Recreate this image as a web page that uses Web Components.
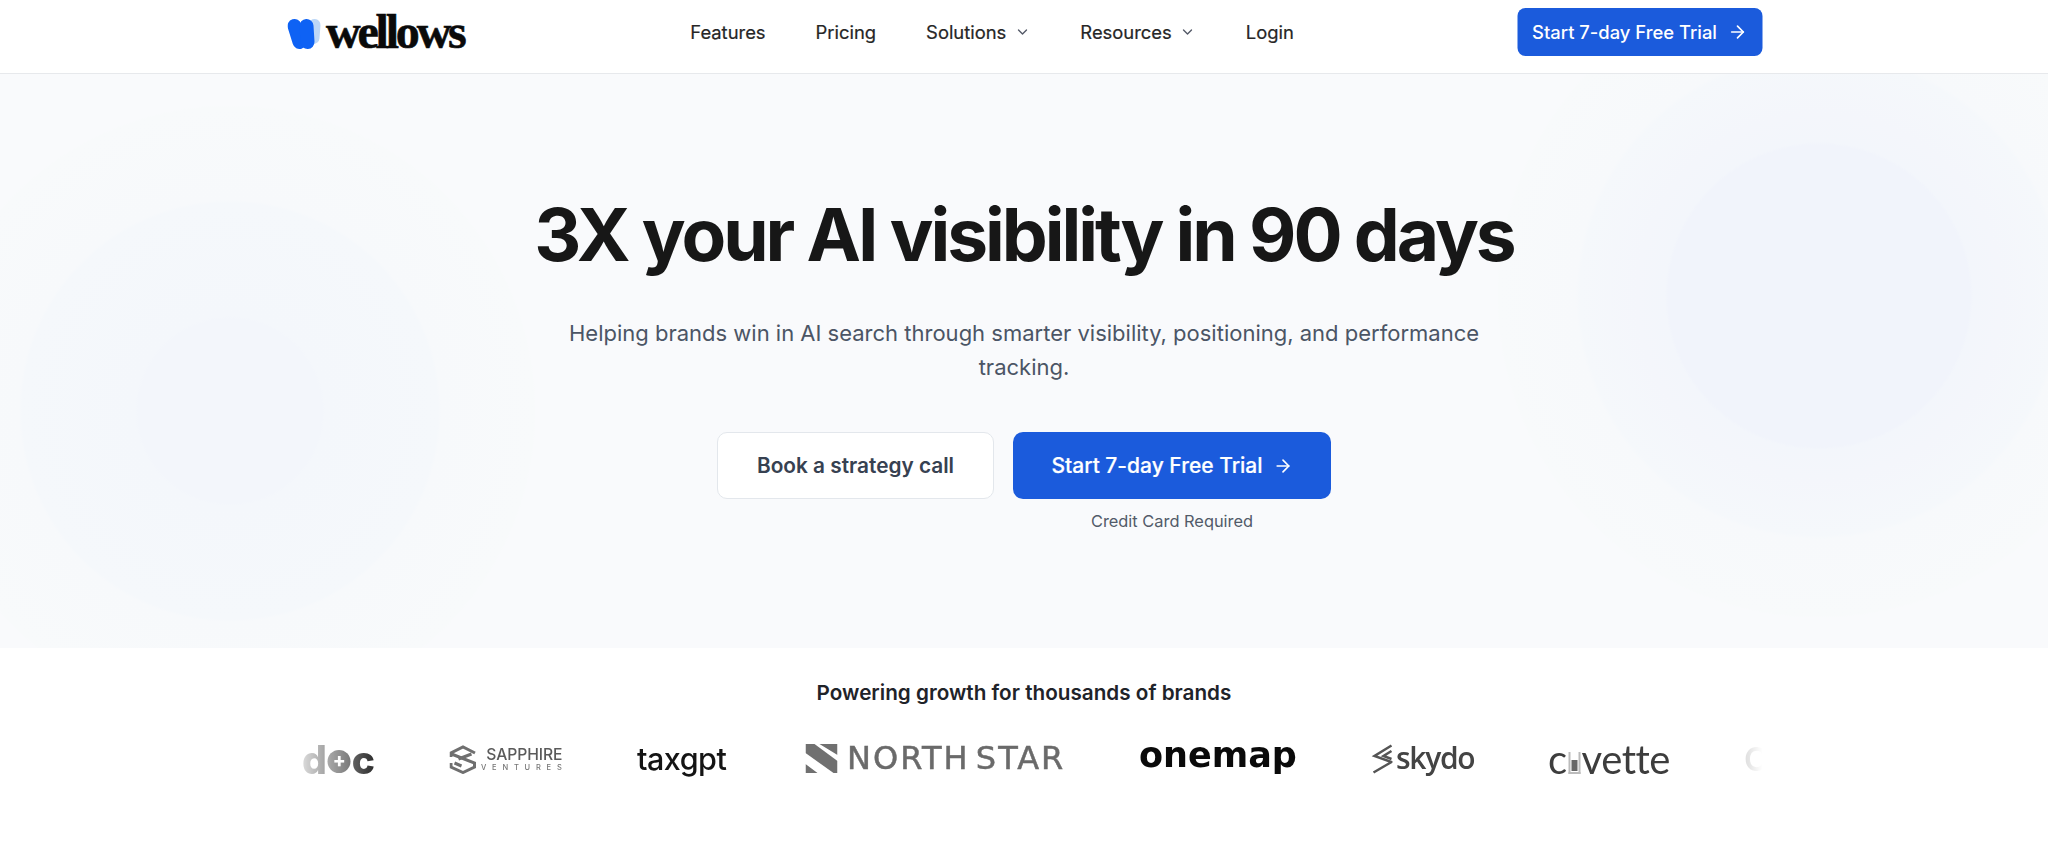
<!DOCTYPE html>
<html lang="en">
<head>
<meta charset="utf-8">
<title>wellows</title>
<style>
  html, body { margin: 0; padding: 0; background: #fff; }
  body { font-family: Inter, "Liberation Sans", sans-serif; color: #171717; overflow: hidden; }
</style>
</head>
<body>
<site-nav></site-nav>
<hero-section></hero-section>
<brand-strip></brand-strip>

<script>
  const arrow = `<svg width="20" height="20" viewBox="0 0 24 24" fill="none" stroke="currentColor" stroke-width="2" stroke-linecap="round" stroke-linejoin="round"><path d="M5 12h14"/><path d="m12 5 7 7-7 7"/></svg>`;
  const chevron = `<svg width="16" height="16" viewBox="0 0 24 24" fill="none" stroke="#525866" stroke-width="2" stroke-linecap="round" stroke-linejoin="round"><path d="m6 9 6 6 6-6"/></svg>`;

  // 导航栏
  class SiteNav extends HTMLElement {
    constructor() {
      super();
      this.attachShadow({ mode: 'open' });
      this.shadowRoot.innerHTML = `
        <style>
          :host { display: block; height: 73px; background: #fff; border-bottom: 1px solid #e7e9ec; }
          .inner { width: 1475px; height: 64px; margin: 0 auto; display: flex; align-items: center; justify-content: space-between; transform: translateX(.5px); }
          .brand { display: flex; align-items: center; width: 180px; height: 64px; }
          .brand svg { flex: none; margin-right: 5px; margin-top: 3px; }
          .word { font: 700 48px/64px "Liberation Serif", serif; letter-spacing: -3.200px; color: #0a0a0a; -webkit-text-stroke: .6px #0a0a0a; }
          nav { display: flex; align-items: center; gap: 50px; font-size: 18.400px; font-weight: 400; color: #262626; margin-left: 0; -webkit-text-stroke: .2px #262626; }
          nav span { display: flex; align-items: center; gap: 8px; }
          .cta { display: flex; align-items: center; gap: 10px; height: 48px; box-sizing: border-box; padding: 0 15px; background: #1b5bdc; color: #fff; border-radius: 8px; font-size: 18.400px; font-weight: 500; }
        </style>
        <div class="inner">
          <div class="brand">
            <svg width="34" height="32" viewBox="0 0 34 32" fill="none" stroke-linecap="round">
              <path d="M27 7 26 20" stroke="#bcd7f7" stroke-width="12"/>
              <path d="M7 8 12 24" stroke="#0e62f4" stroke-width="14"/>
              <path d="M19 8 20 24" stroke="#0e62f4" stroke-width="14"/>
            </svg>
            <span class="word">wellows</span>
          </div>
          <nav>
            <span>Features</span>
            <span>Pricing</span>
            <span>Solutions ${chevron}</span>
            <span>Resources ${chevron}</span>
            <span>Login</span>
          </nav>
          <div class="cta">Start 7-day Free Trial ${arrow}</div>
        </div>`;
    }
  }

  // 首屏
  class HeroSection extends HTMLElement {
    constructor() {
      super();
      this.attachShadow({ mode: 'open' });
      this.shadowRoot.innerHTML = `
        <style>
          :host {
            display: block; height: 574px; box-sizing: border-box; padding-top: 121px; text-align: center;
            background:
              radial-gradient(circle 306px at 230px 337px, #f3f6fb 0, #f3f6fb 92px, #f4f7fb 95px, #f5f8fb 208px, #f7f9fb 211px, #f8fafb 304px, rgba(249,250,252,0) 306px),
              radial-gradient(circle 322px at 1819px 222px, #f1f4fb 0, #f1f4fb 151px, #f3f6fb 154px, #f4f6fb 182px, #f5f8fb 239px, #f7f9fb 243px, #f8fafb 320px, rgba(249,250,252,0) 322px),
              #f9fafc;
          }
          h1 { margin: 0; font-size: 73px; line-height: 80px; font-weight: 700; letter-spacing: -3.030px; color: #171717; }
          p { margin: 41px auto 0; width: 930px; font-size: 22px; line-height: 34px; color: #4b5565; }
          .actions { display: flex; justify-content: center; align-items: flex-start; gap: 19px; margin-top: 48px; }
          .btn { display: flex; align-items: center; justify-content: center; box-sizing: border-box; height: 67px; border-radius: 10px; font-size: 20.800px; font-weight: 600; }
          .ghost { width: 277px; background: #fff; border: 1px solid #e3e7ec; color: #374151; }
          .solid { width: 318px; gap: 10px; background: #1b5bdc; color: #fff; font-size: 21px; font-weight: 500; -webkit-text-stroke: .2px #fff; }
          .stack { display: flex; flex-direction: column; align-items: center; }
          small { display: block; margin-top: 11px; font-size: 16.400px; line-height: 22px; color: #525b69; }
        </style>
        <h1>3X your AI visibility in 90 days</h1>
        <p>Helping brands win in AI search through smarter visibility, positioning, and performance tracking.</p>
        <div class="actions">
          <div class="btn ghost">Book a strategy call</div>
          <div class="stack">
            <div class="btn solid">Start 7-day Free Trial ${arrow}</div>
            <small>Credit Card Required</small>
          </div>
        </div>`;
    }
  }

  // 单个品牌，slot 里放文字
  class BrandLogo extends HTMLElement {
    constructor() {
      super();
      this.attachShadow({ mode: 'open' });
      this.shadowRoot.innerHTML = `
        <style>
          :host { display: flex; flex: none; align-items: center; height: 50px; white-space: nowrap; filter: blur(.6px); }
          ::slotted(svg) { flex: none; }
        </style>
        <slot></slot>`;
    }
  }

  // 品牌条
  class BrandStrip extends HTMLElement {
    constructor() {
      super();
      this.attachShadow({ mode: 'open' });
      this.shadowRoot.innerHTML = `
        <style>
          :host { display: block; height: 205px; background: #fff; text-align: center; }
          h2 { margin: 0; padding-top: 30px; font-size: 20.700px; line-height: 30px; font-weight: 600; color: #1f2329; }
          .track { width: 1475px; margin: 26px auto 0; display: flex; align-items: center; gap: 74px; overflow: hidden; transform: translateX(.5px);
            -webkit-mask-image: linear-gradient(90deg, transparent 0, #000 90px, #000 1385px, transparent 100%);
            mask-image: linear-gradient(90deg, transparent 0, #000 90px, #000 1385px, transparent 100%); }
        </style>
        <h2>Powering growth for thousands of brands</h2>
        <div class="track"><slot></slot></div>`;
    }
  }

  customElements.define('site-nav', SiteNav);
  customElements.define('hero-section', HeroSection);
  customElements.define('brand-logo', BrandLogo);
  customElements.define('brand-strip', BrandStrip);

  // 品牌列表
  document.querySelector('brand-strip').innerHTML = `
    <brand-logo style="width:88px;font:800 39px Inter,sans-serif;color:#262626;justify-content:flex-end;gap:0">d<span style="display:inline-flex;align-items:center;justify-content:center;width:23px;height:23px;margin:4px 1px 0;border-radius:50%;background:#404040;color:#fff;font:800 19px/20px Inter,sans-serif">+</span>c</brand-logo>
    <brand-logo style="width:113px;gap:5px;color:#5a5a5a">
      <svg width="27" height="29" viewBox="0 0 27 29" fill="none" stroke="#6f6f6f" stroke-width="3"><path d="M1.500 12V8L13.500 2l12 6"/><path d="M2 9l23 9v4l-11.500 5.500L1.500 22v-4"/><path d="m9 14 13-5M5 18l7 3"/></svg>
      <span style="display:flex;flex-direction:column;font:500 15.700px/17px Inter,sans-serif;letter-spacing:-.1px"><span>SAPPHIRE</span><span style="font-size:7.500px;line-height:9px;letter-spacing:5.800px;color:#777">VENTURES</span></span>
    </brand-logo>
    <brand-logo style="width:95px;padding-left:1px;margin-right:-1px;font:500 30.500px Inter,sans-serif;color:#141414;letter-spacing:-.5px;margin-top:-2px">taxgpt</brand-logo>
    <brand-logo style="width:260px;gap:10px;font:400 32px 'DejaVu Sans',sans-serif;color:#6a6a6a;letter-spacing:2px;word-spacing:-6px;-webkit-text-stroke:.5px #6a6a6a;margin-top:-2px">
      <svg width="32" height="29" viewBox="0 0 32 29" fill="#707070"><path d="M0 0h9l23 17v12h-4L0 9z"/><path d="M14 0h18v11zM0 20l12 9H0z"/></svg>
      <span>NORTH STAR</span>
    </brand-logo>
    <brand-logo style="width:158px;font:700 35px 'DejaVu Sans',sans-serif;color:#0a0a0a;margin-top:-8px">onemap</brand-logo>
    <brand-logo style="width:103px;gap:4px;font:600 30px 'Open Sans',sans-serif;color:#444;letter-spacing:-1.300px">
      <svg width="21" height="30" viewBox="0 0 21 30" fill="none" stroke="#555" stroke-width="2.500"><path d="M20 1.500 3 12l17 6L2 28.500"/><path d="m20 7-8 5 8 3"/></svg>
      <span style="margin-top:-3px">skydo</span>
    </brand-logo>
    <brand-logo style="width:122px;font:400 40px Lato,sans-serif;color:#3d3d3d;letter-spacing:-.5px">c<span style="display:inline-flex;align-items:flex-end;justify-content:center;width:12px;height:22px;margin:8px 1px 0 2px;box-sizing:border-box;border:2px solid #bbb;border-top:0;"><span style="width:6px;height:11px;margin-bottom:1px;background:#666"></span></span>vette</brand-logo>
    <brand-logo style="width:40px;font:600 33px Inter,sans-serif;color:#555">C</brand-logo>`;
</script>
</body>
</html>
